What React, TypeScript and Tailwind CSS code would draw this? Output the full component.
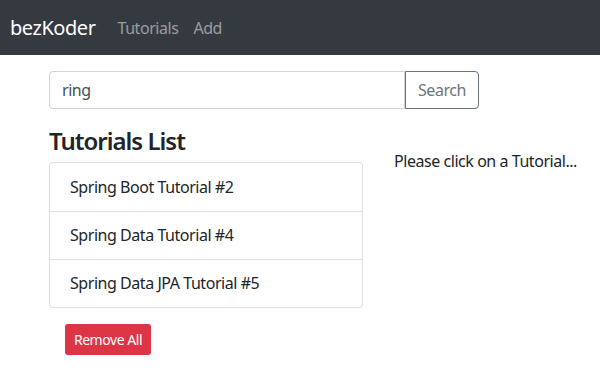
import React from "react";

const tutorials = ["Spring Boot Tutorial #2", "Spring Data Tutorial #4", "Spring Data JPA Tutorial #5"];

const App: React.FC = () => {
  return (
    <div className="min-h-[380px] bg-white text-[#212529] font-['Noto_Sans',sans-serif] tracking-[-0.45px]">
      <nav className="h-[55px] bg-[#343a40] flex items-center px-[10px]">
        <a href="#" className="text-[20px] text-white mr-[22px]">
          bezKoder
        </a>
        <div className="flex gap-[15px] text-[16px] text-white/50">
          <a href="#">Tutorials</a>
          <a href="#">Add</a>
        </div>
      </nav>

      <div className="pl-[49px] pt-[16px]">
        <div className="flex w-[430px] h-[38px]">
          <input
            type="text"
            defaultValue="ring"
            className="flex-1 min-w-0 border border-[#ced4da] rounded-l-[4px] px-[12px] text-[16px] text-[#495057] outline-none"
          />
          <button className="w-[74px] border border-[#6c757d] rounded-r-[4px] text-[16px] text-[#6c757d]">
            Search
          </button>
        </div>

        <div className="flex mt-[16px]">
          <div className="w-[314px]">
            <h4 className="text-[24px] font-semibold leading-[1.2] tracking-[-1px] pt-[2px] mb-[6px]">
              Tutorials List
            </h4>
            <ul className="border border-[#dfdfdf] rounded-[4px]">
              {tutorials.map((t, i) => (
                <li
                  key={t}
                  className={`h-[48px] flex items-center px-[20px] text-[16px] ${i > 0 ? "border-t border-[#dfdfdf]" : ""}`}
                >
                  {t}
                </li>
              ))}
            </ul>
            <button className="m-[16px] h-[31px] w-[86px] rounded-[3px] bg-[#dc3545] text-white text-[14px]">
              Remove All
            </button>
          </div>
          <div className="ml-[31px] pt-[24px]">
            <p className="text-[16px] leading-[24px]">Please click on a Tutorial...</p>
          </div>
        </div>
      </div>
    </div>
  );
};

export default App;
